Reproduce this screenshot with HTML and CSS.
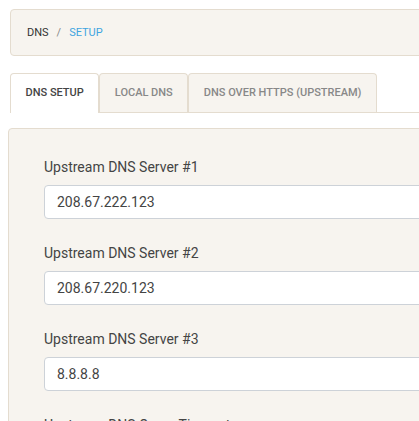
FILE: index.html
```html
<!DOCTYPE html>
<html lang="en">
<head>
    <meta charset="UTF-8">
    <meta name="viewport" content="width=device-width, initial-scale=1.0">
    <title>DNS Setup</title>
    <link rel="stylesheet" href="styles.css">
</head>
<body>
    <div class="page">
        <!-- Breadcrumb -->
        <div class="breadcrumb">
            <span class="crumb">DNS</span>
            <span class="crumb-sep">/</span>
            <span class="crumb active">Setup</span>
        </div>

        <!-- Tabs -->
        <div class="tabs">
            <div class="tab active">DNS Setup</div>
            <div class="tab">Local DNS</div>
            <div class="tab">DNS over HTTPS (Upstream)</div>
        </div>

        <div class="tab-panel">
            <div class="form-group">
                <label for="dns1">Upstream DNS Server #1</label>
                <input id="dns1" type="text" value="208.67.222.123">
            </div>
            <div class="form-group">
                <label for="dns2">Upstream DNS Server #2</label>
                <input id="dns2" type="text" value="208.67.220.123">
            </div>
            <div class="form-group">
                <label for="dns3">Upstream DNS Server #3</label>
                <input id="dns3" type="text" value="8.8.8.8">
            </div>
            <div class="form-group">
                <label for="timeout">Upstream DNS Query Timeout</label>
                <input id="timeout" type="text" value="2">
            </div>
        </div>
    </div>
</body>
</html>
```

FILE: styles.css
```css
body {
    font-family: Roboto, "Liberation Sans", sans-serif;
    background-color: #fff;
    color: #444;
    margin: 0;
    padding: 0;
    overflow: hidden;
}

.page {
    width: 720px;
    padding: 9px 0 0 8px;
}

.breadcrumb {
    display: flex;
    align-items: center;
    height: 45px;
    margin-left: 2px;
    padding: 0 16px;
    background-color: #f7f4ef;
    border: 1px solid #e4dccf;
    border-radius: 4px;
    font-size: 11px;
    text-transform: uppercase;
}

.crumb {
    color: #333;
}

.crumb.active {
    color: #3fa5e0;
}

.crumb-sep {
    color: #888;
    margin: 0 8px;
}

.tabs {
    display: flex;
    margin: 17px 0 0 2px;
    border-bottom: 1px solid #e4dccf;
}

.tab {
    padding: 13px 14.5px;
    line-height: 12px;
    font-size: 11px;
    font-weight: 500;
    text-transform: uppercase;
    color: #888;
    background-color: #f7f4ef;
    border: 1px solid #e4dccf;
    border-bottom: none;
    border-radius: 4px 4px 0 0;
}

.tab.active {
    color: #444;
    background-color: #fff;
    margin-bottom: -1px;
    padding-bottom: 14px;
}

.tab-panel {
    margin-top: 15px;
    padding: 28px 0 20px 35px;
    background-color: #f7f4ef;
    border: 1px solid #e4dccf;
    border-radius: 4px;
}

.form-group {
    margin-bottom: 24px;
}

.form-group label {
    display: block;
    font-size: 14px;
    line-height: 20px;
    margin-bottom: 8px;
    color: #444;
}

.form-group input {
    display: block;
    box-sizing: border-box;
    width: 100%;
    height: 34px;
    padding: 0 12px;
    font-family: Roboto, "Liberation Sans", sans-serif;
    font-size: 14px;
    color: #444;
    background-color: #fff;
    border: 1px solid #cdd2d8;
    border-radius: 4px;
}
```
